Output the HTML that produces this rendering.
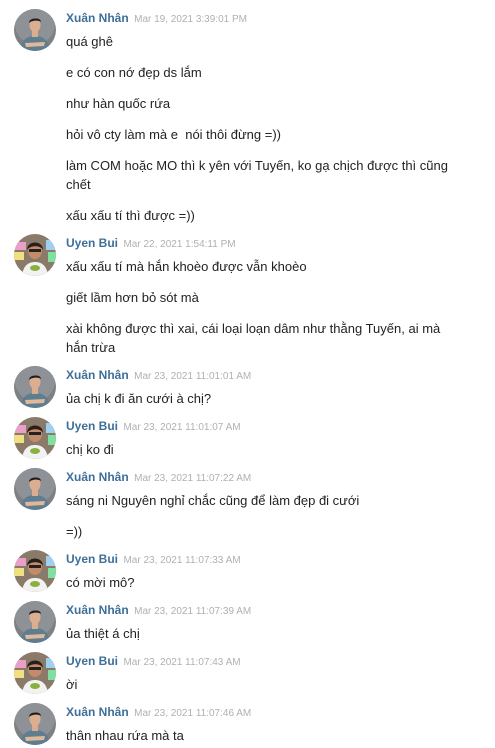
<!DOCTYPE html>
<html><head><meta charset="utf-8">
<style>
html,body{margin:0;padding:0;background:#fff;}
body{width:495px;height:748px;overflow:hidden;font-family:"Liberation Sans",Arial,sans-serif;position:relative;}
.wrap{padding-top:9px;}
.m{position:relative;padding-left:66px;margin-bottom:9.5px;}
.av{position:absolute;left:14px;top:0;width:42px;height:42px;border-radius:50%;overflow:hidden;}
.h{height:16px;line-height:18px;white-space:nowrap;}
.n{font-size:12px;font-weight:bold;color:#3d6f99;}
.d{font-size:10px;color:#b0b0b0;margin-left:1px;}
.p{font-size:13px;line-height:19px;color:#222;white-space:nowrap;margin:12px 0 0 0;}
.h + .p{margin-top:6.5px;}
</style></head><body>
<svg width="0" height="0" style="position:absolute">
<defs>
<symbol id="xn" viewBox="0 0 42 42">
<rect width="42" height="42" fill="#7d8185"/>
<circle cx="21" cy="15" r="20" fill="#8e9296"/>
<path d="M6 42 C7 31 13 27 21 27 C29 27 35 31 36 42Z" fill="#5f7d90"/>
<path d="M11 34 L31 33 L30 37 L12 38Z" fill="#e0b89a"/>
<rect x="18" y="22" width="6" height="6" fill="#d9ad90"/>
<ellipse cx="21" cy="16" rx="5.5" ry="7" fill="#dcae90"/>
<path d="M15 14 C15 8 27 8 27 13 C25 11 18 11 15 14Z" fill="#1e1e22"/>
</symbol>
<symbol id="ub" viewBox="0 0 42 42">
<rect width="42" height="42" fill="#8a7a6a"/>
<rect x="0" y="8" width="12" height="8" fill="#e8a0c8"/>
<rect x="0" y="18" width="10" height="8" fill="#f0e080"/>
<rect x="32" y="6" width="10" height="10" fill="#a0d0f0"/>
<rect x="34" y="18" width="8" height="10" fill="#80e0a0"/>
<path d="M8 42 C9 32 14 28 21 28 C28 28 33 32 34 42Z" fill="#f2f2f2"/>
<ellipse cx="21" cy="17" rx="7" ry="8" fill="#c48a6a"/>
<path d="M13 16 C13 6 29 6 29 16 C27 11 16 11 13 16Z" fill="#2a1e18"/>
<rect x="15" y="15" width="12" height="3" fill="#222"/>
<ellipse cx="21" cy="34" rx="5" ry="3" fill="#8ab040"/>
</symbol>
</defs></svg>
<div class="wrap">

<div class="m"><svg class="av"><use href="#xn"/></svg>
<div class="h"><span class="n">Xuân Nhân</span> <span class="d">Mar 19, 2021 3:39:01 PM</span></div>
<p class="p">quá ghê</p>
<p class="p">e có con nớ đẹp ds lắm</p>
<p class="p">như hàn quốc rứa</p>
<p class="p">hỏi vô cty làm mà e&nbsp; nói thôi đừng =))</p>
<p class="p">làm COM hoặc MO thì k yên với Tuyến, ko gạ chịch được thì cũng<br>chết</p>
<p class="p">xấu xấu tí thì được =))</p>
</div>

<div class="m"><svg class="av"><use href="#ub"/></svg>
<div class="h"><span class="n">Uyen Bui</span> <span class="d">Mar 22, 2021 1:54:11 PM</span></div>
<p class="p">xấu xấu tí mà hắn khoèo được vẫn khoèo</p>
<p class="p">giết lầm hơn bỏ sót mà</p>
<p class="p">xài không được thì xai, cái loại loạn dâm như thằng Tuyến, ai mà<br>hắn trừa</p>
</div>

<div class="m"><svg class="av"><use href="#xn"/></svg>
<div class="h"><span class="n">Xuân Nhân</span> <span class="d">Mar 23, 2021 11:01:01 AM</span></div>
<p class="p">ủa chị k đi ăn cưới à chị?</p>
</div>

<div class="m"><svg class="av"><use href="#ub"/></svg>
<div class="h"><span class="n">Uyen Bui</span> <span class="d">Mar 23, 2021 11:01:07 AM</span></div>
<p class="p">chị ko đi</p>
</div>

<div class="m"><svg class="av"><use href="#xn"/></svg>
<div class="h"><span class="n">Xuân Nhân</span> <span class="d">Mar 23, 2021 11:07:22 AM</span></div>
<p class="p">sáng ni Nguyên nghỉ chắc cũng để làm đẹp đi cưới</p>
<p class="p">=))</p>
</div>

<div class="m"><svg class="av"><use href="#ub"/></svg>
<div class="h"><span class="n">Uyen Bui</span> <span class="d">Mar 23, 2021 11:07:33 AM</span></div>
<p class="p">có mời mô?</p>
</div>

<div class="m"><svg class="av"><use href="#xn"/></svg>
<div class="h"><span class="n">Xuân Nhân</span> <span class="d">Mar 23, 2021 11:07:39 AM</span></div>
<p class="p">ủa thiệt á chị</p>
</div>

<div class="m"><svg class="av"><use href="#ub"/></svg>
<div class="h"><span class="n">Uyen Bui</span> <span class="d">Mar 23, 2021 11:07:43 AM</span></div>
<p class="p">ời</p>
</div>

<div class="m"><svg class="av"><use href="#xn"/></svg>
<div class="h"><span class="n">Xuân Nhân</span> <span class="d">Mar 23, 2021 11:07:46 AM</span></div>
<p class="p">thân nhau rứa mà ta</p>
</div>

</div>
</body></html>
